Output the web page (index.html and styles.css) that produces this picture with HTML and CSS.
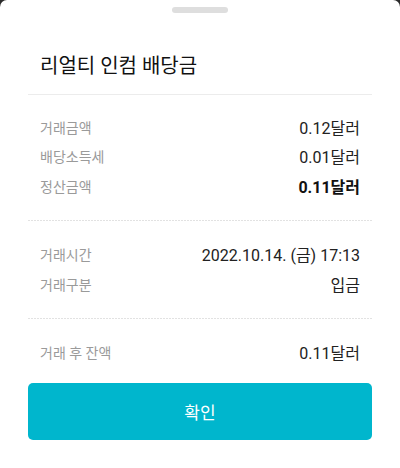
FILE: index.html
```html
<!DOCTYPE html>
<html>
<head>
    <meta name="viewport" content="width=device-width, initial-scale=1">
    <title>리얼티 인컴 배당금</title>
<link rel="stylesheet" href="styles.css">
</head>
<body>

<div class="sheet">
  <div class="handle"></div>
  <h2 class="title">리얼티 인컴 배당금</h2>

  <div class="section first">
    <div class="row"><span class="label">거래금액</span><span class="value">0.12달러</span></div>
    <div class="row"><span class="label">배당소득세</span><span class="value">0.01달러</span></div>
    <div class="row"><span class="label">정산금액</span><span class="value strong">0.11달러</span></div>
  </div>

  <div class="section">
    <div class="row"><span class="label">거래시간</span><span class="value">2022.10.14. (금) 17:13</span></div>
    <div class="row"><span class="label">거래구분</span><span class="value">입금</span></div>
  </div>

  <div class="section">
    <div class="row"><span class="label">거래 후 잔액</span><span class="value">0.11달러</span></div>
  </div>

  <button class="okbtn" type="button">확인</button>
</div>

</body>
</html>
```

FILE: styles.css
```css
html, body {
    height: 100%;
}

body {
    margin: 0;
    background-color: #2b2b2b;
    font-family: Roboto, "Noto Sans CJK KR", sans-serif;
}

.sheet {
    height: 100%;
    box-sizing: border-box;
    background-color: #ffffff;
    border-radius: 7px 7px 0 0;
    padding: 7px 28px 0 28px;
}

.handle {
    width: 56px;
    height: 6px;
    margin: 0 auto;
    border-radius: 3px;
    background-color: #dedede;
}

.title {
    margin: 39px 0 0 0;
    padding: 0 12px 14px 12px;
    font-size: 20px;
    font-weight: 400;
    line-height: 28px;
    color: #111111;
}

.section {
    padding: 20px 12px 19px 12px;
    background-image: repeating-linear-gradient(to right, #e2e2e2 0 2px, transparent 2px 3px);
    background-size: 100% 1px;
    background-repeat: no-repeat;
    background-position: top left;
}

.section.first {
    padding-top: 17px;
    background-image: none;
    border-top: 1px solid #ececec;
}

.row {
    display: flex;
    justify-content: space-between;
    align-items: center;
    height: 29.5px;
}

.label {
    font-size: 14px;
    color: #9a9a9a;
}

.value {
    font-size: 16px;
    color: #222222;
}

.value.strong {
    font-weight: 700;
    color: #111111;
}

.okbtn {
    display: block;
    width: 100%;
    height: 57px;
    margin-top: -3px;
    border: none;
    border-radius: 5px;
    background-color: #00b6cd;
    color: #ffffff;
    font-family: inherit;
    font-size: 17px;
}
```
